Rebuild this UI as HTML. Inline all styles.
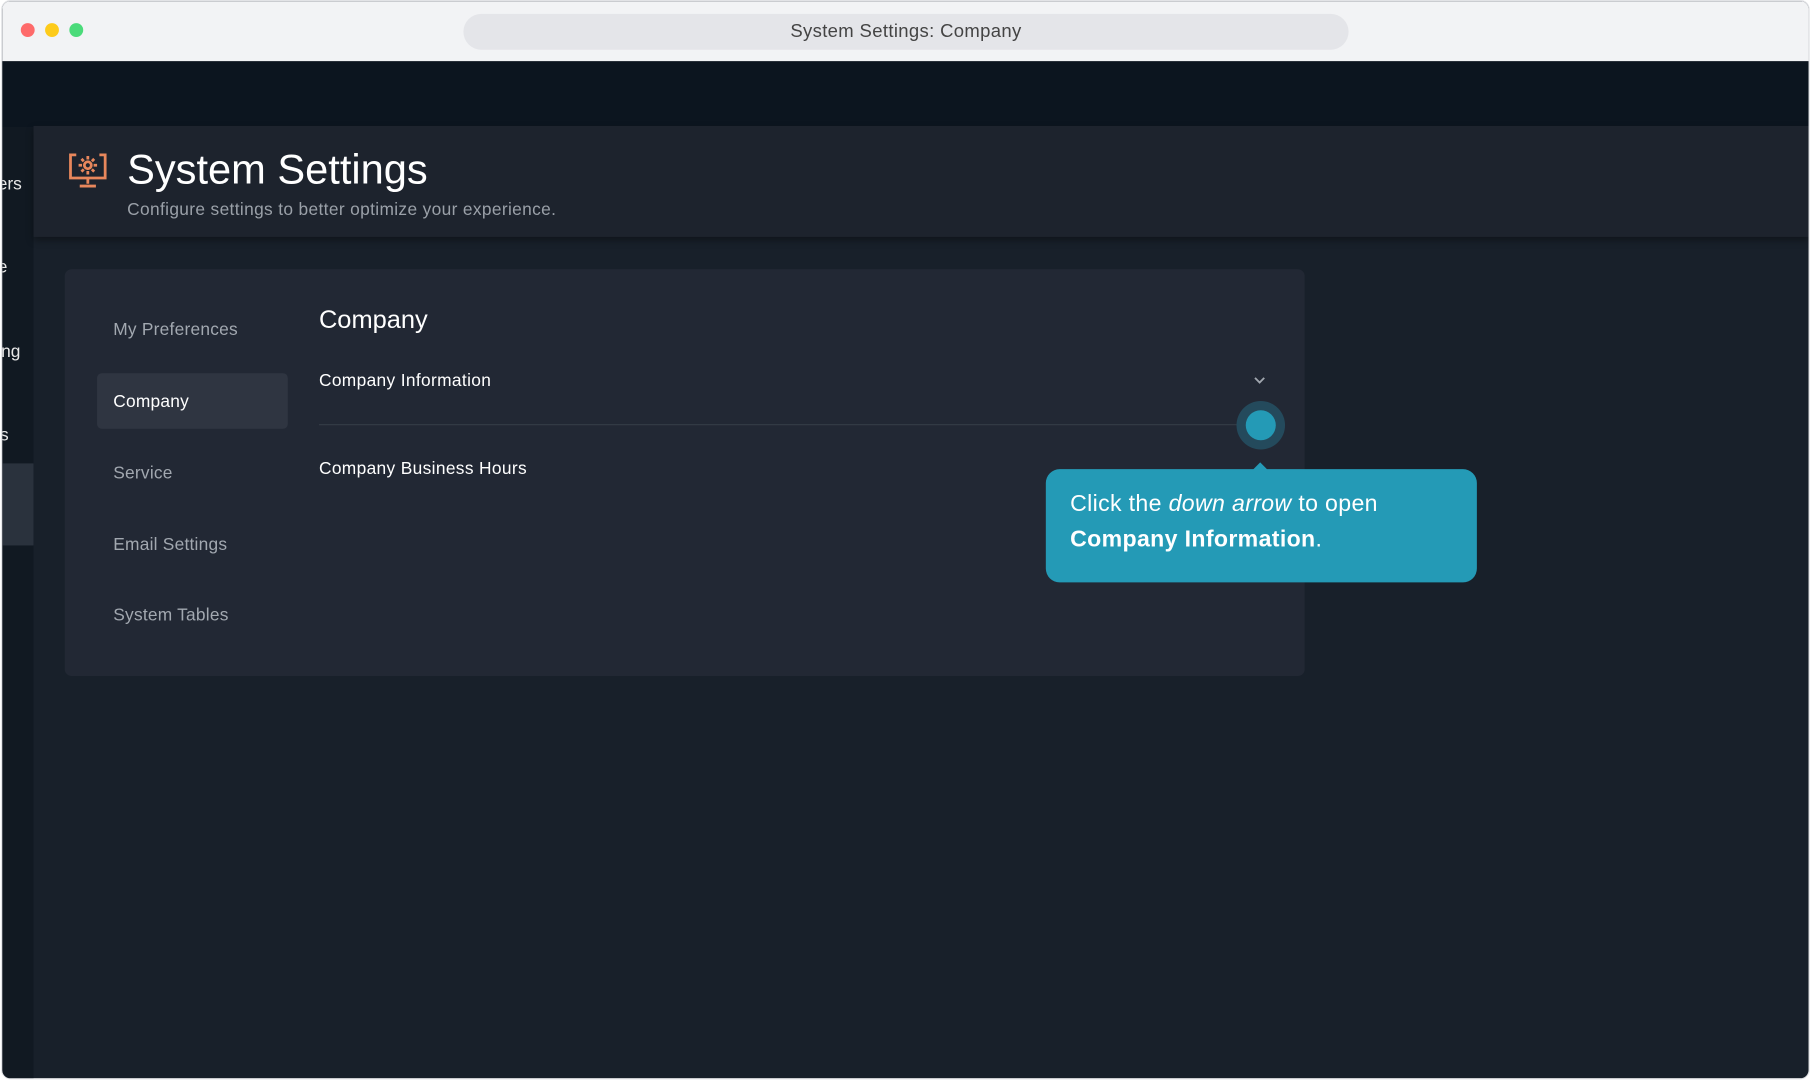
<!DOCTYPE html>
<html><head><meta charset="utf-8"><style>
html,body{margin:0;padding:0;width:1812px;height:1080px;overflow:hidden;background:#fff;font-family:"Liberation Sans",sans-serif}
#w{position:absolute;left:0;top:0;width:1568px;height:934.6px;transform:scale(1.15561);transform-origin:0 0}
.a{position:absolute}
.nav{position:absolute;left:96px;font-size:15px;color:#a2a8b0;letter-spacing:.2px}
</style></head><body><div id="w">
<div class="a" style="left:1px;top:0;width:1565px;height:934px;border-radius:8px;background:#18202a;overflow:hidden;border:1px solid #e2e3e6;box-sizing:border-box">
 <div class="a" style="left:0;top:0;right:0;height:52px;background:#f2f3f5"></div>
 <div class="a" style="left:16px;top:19px;width:12px;height:12px;border-radius:50%;background:#fe6a6a"></div>
 <div class="a" style="left:37px;top:19px;width:12px;height:12px;border-radius:50%;background:#fdcb1b"></div>
 <div class="a" style="left:58px;top:19px;width:12px;height:12px;border-radius:50%;background:#4bdb7a"></div>
 <div class="a" style="left:399px;top:11px;width:766px;height:31px;border-radius:16px;background:#e4e5e9;color:#444;font-size:16px;line-height:31px;text-align:center;letter-spacing:.3px">System Settings: Company</div>
 <div class="a" style="left:0;top:52px;right:0;height:57px;background:#0c151f"></div>
 <div class="a" style="left:0;top:109px;width:27px;height:830px;background:#111922;color:#e8e8e8;font-size:15px">
  <div class="a" style="left:-4px;top:41px">ers</div>
  <div class="a" style="left:-4px;top:113px">e</div>
  <div class="a" style="left:-1px;top:186px">ng</div>
  <div class="a" style="left:-2px;top:258px">s</div>
  <div class="a" style="left:0;top:291px;width:27px;height:71px;background:#2a323d"></div>
 </div>
 <div class="a" style="left:27px;top:108px;right:0;height:96px;background:#1d232d;box-shadow:0 3px 6px rgba(0,0,0,.35)"></div>
 <svg class="a" style="left:56px;top:129px" width="36" height="36" viewBox="0 0 36 36" fill="none" stroke="#e8875c" stroke-width="2.4">
  <path d="M8 4H3v20h30V4h-5"/><path d="M18 24v5M11 31h14"/>
  <circle cx="18" cy="13" r="3"/><path d="M18 5v3M18 18v3M10 13h3M23 13h3M12.5 7.5l2 2M21.5 16.5l2 2M23.5 7.5l-2 2M14.5 16.5l-2 2"/>
 </svg>
 <div class="a" style="left:108px;top:125px;font-size:36px;color:#fff">System Settings</div>
 <div class="a" style="left:108px;top:172px;font-size:15px;color:#9aa0a8;letter-spacing:.3px">Configure settings to better optimize your experience.</div>
 <div class="a" style="left:54px;top:232px;width:1073px;height:352px;border-radius:6px;background:#222834"></div>
 <div class="nav" style="top:276px">My Preferences</div>
 <div class="a" style="left:82px;top:322px;width:165px;height:48px;border-radius:4px;background:#2f3541"></div>
 <div class="nav" style="top:338px;color:#fff">Company</div>
 <div class="nav" style="top:400px">Service</div>
 <div class="nav" style="top:462px">Email Settings</div>
 <div class="nav" style="top:523px">System Tables</div>
 <div class="a" style="left:274px;top:263px;font-size:22px;color:#fff">Company</div>
 <div class="a" style="left:274px;top:320px;font-size:15px;color:#fff;letter-spacing:.3px">Company Information</div>
 <svg class="a" style="left:1082px;top:323px" width="12" height="10"><path d="M2 3l4 4 4-4" stroke="#a0a6ae" stroke-width="1.6" fill="none"/></svg>
 <div class="a" style="left:274px;top:366px;width:820px;height:1px;background:#353c47"></div>
 <div class="a" style="left:274px;top:396px;font-size:15px;color:#fff;letter-spacing:.3px">Company Business Hours</div>
 <div class="a" style="left:1068px;top:346px;width:42px;height:42px;border-radius:50%;background:#244a5c"></div>
 <div class="a" style="left:1076px;top:354px;width:26px;height:26px;border-radius:50%;background:#249ab6"></div>
 <div class="a" style="left:1084px;top:401px;width:9px;height:9px;background:#249ab6;transform:rotate(45deg)"></div>
 <div class="a" style="left:903px;top:405px;width:373px;height:98px;border-radius:12px;background:#249ab6;color:#fff;font-size:20px;line-height:31px;box-sizing:border-box;padding:15px 21px;letter-spacing:.3px">Click the <i>down arrow</i> to open <b>Company Information</b>.</div>
</div>
</div></body></html>
